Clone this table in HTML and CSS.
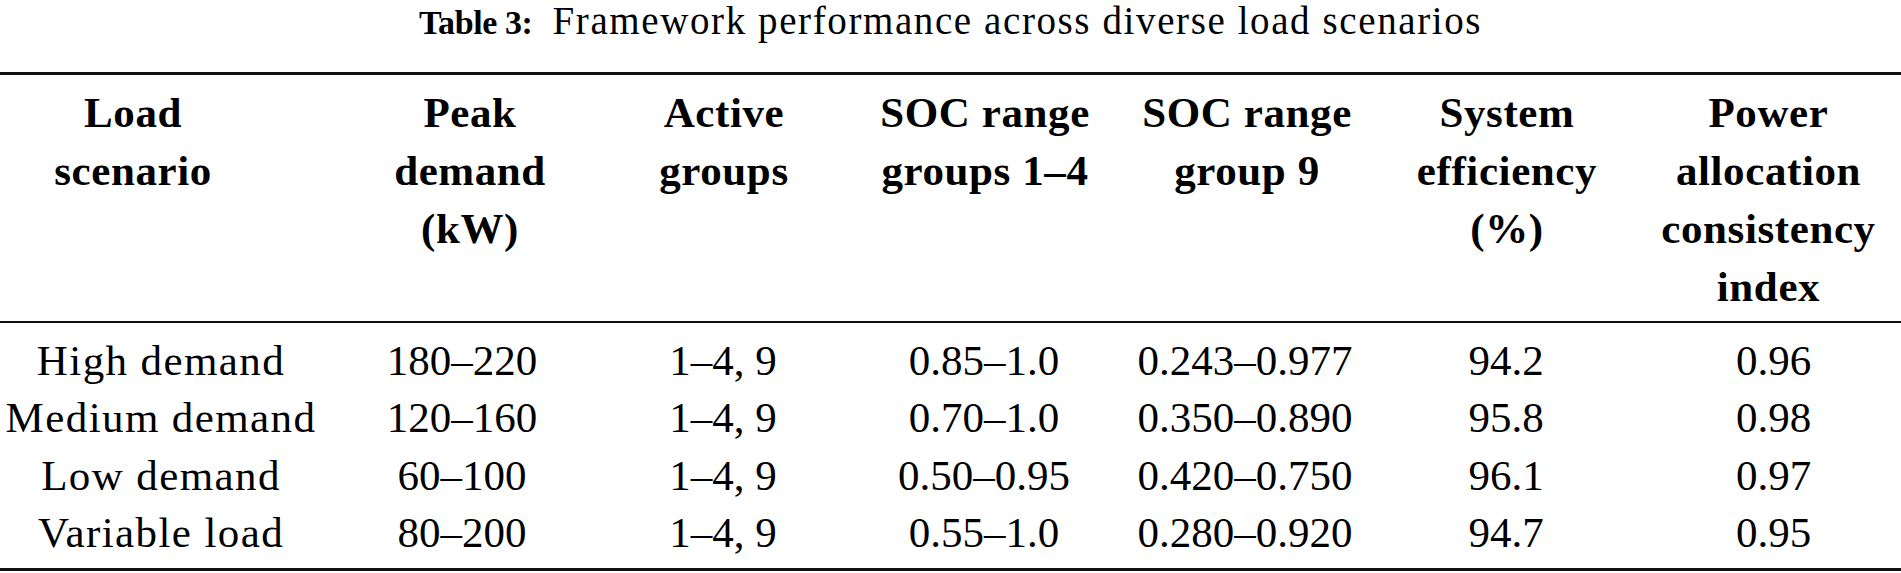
FILE: index.html
```html
<!DOCTYPE html>
<html lang="en">
<head>
<meta charset="utf-8">
<title>Table 3</title>
<link rel="stylesheet" href="styles.css">
</head>
<body>
<div class="page">
  <p class="caption"><span class="caption-label">Table 3:</span>Framework performance across diverse load scenarios</p>
  <table class="data-table">
    <colgroup>
      <col class="c1"><col class="c2"><col class="c3"><col class="c4"><col class="c5"><col class="c6"><col class="c7">
    </colgroup>
    <thead>
      <tr>
        <th class="h1">Load<br>scenario</th>
        <th class="h2">Peak<br>demand<br>(kW)</th>
        <th class="h3">Active<br>groups</th>
        <th class="h4">SOC range<br>groups 1–4</th>
        <th class="h5">SOC range<br>group 9</th>
        <th class="h6">System<br>efficiency<br>(%)</th>
        <th class="h7">Power<br>allocation<br>consistency<br>index</th>
      </tr>
    </thead>
    <tbody>
      <tr class="first">
        <td class="label">High demand</td><td>180–220</td><td>1–4, 9</td><td>0.85–1.0</td><td>0.243–0.977</td><td>94.2</td><td>0.96</td>
      </tr>
      <tr>
        <td class="label">Medium demand</td><td>120–160</td><td>1–4, 9</td><td>0.70–1.0</td><td>0.350–0.890</td><td>95.8</td><td>0.98</td>
      </tr>
      <tr>
        <td class="label">Low demand</td><td>60–100</td><td>1–4, 9</td><td>0.50–0.95</td><td>0.420–0.750</td><td>96.1</td><td>0.97</td>
      </tr>
      <tr class="last">
        <td class="label">Variable load</td><td>80–200</td><td>1–4, 9</td><td>0.55–1.0</td><td>0.280–0.920</td><td>94.7</td><td>0.95</td>
      </tr>
    </tbody>
  </table>
</div>
</body>
</html>
```

FILE: styles.css
```css
html, body {
  margin: 0;
  padding: 0;
  background: #ffffff;
}

body {
  width: 1901px;
  color: #000000;
  font-family: "Liberation Serif", "Times New Roman", serif;
}

.page {
  display: flex;
  flex-direction: column;
}

.caption {
  margin: 0 0 31px 0;
  padding: 0;
  height: 41px;
  font-size: 39px;
  line-height: 41px;
  letter-spacing: 1.6px;
  text-align: center;
  white-space: nowrap;
}

.caption-label {
  font-weight: bold;
  font-size: 34px;
  letter-spacing: -0.4px;
  margin-right: 20px;
}

.data-table {
  width: 1901px;
  border-collapse: collapse;
  table-layout: fixed;
  border-top: 3px solid #111111;
  border-bottom: 3px solid #111111;
  font-size: 43px;
  letter-spacing: 0;
}

.c1 { width: 322px; }
.c2 { width: 280px; }
.c3 { width: 242px; }
.c4 { width: 280px; }
.c5 { width: 242px; }
.c6 { width: 280px; }
.c7 { width: 255px; }

.data-table th,
.data-table td {
  padding: 0;
  text-align: center;
  white-space: nowrap;
  vertical-align: top;
}

.data-table thead tr {
  border-bottom: 2px solid #111111;
}

.data-table th {
  font-weight: bold;
  line-height: 58px;
  padding-top: 9px;
  padding-bottom: 5px;
  letter-spacing: 0.6px;
}

.data-table th.h1 { padding-right: 56px; }
.data-table th.h2 { padding-left: 16px; }
.data-table th.h3 { padding-left: 2px; }
.data-table th.h4 { padding-left: 2px; }
.data-table th.h5 { padding-left: 4px; }
.data-table th.h6 { padding-left: 2px; }
.data-table th.h7 { padding-right: 10px; }

.data-table td {
  line-height: 57.4px;
}

.data-table td.label {
  letter-spacing: 1.4px;
}

.data-table tr.first td { padding-top: 9px; }
.data-table tr.last td { padding-bottom: 6px; }
```
